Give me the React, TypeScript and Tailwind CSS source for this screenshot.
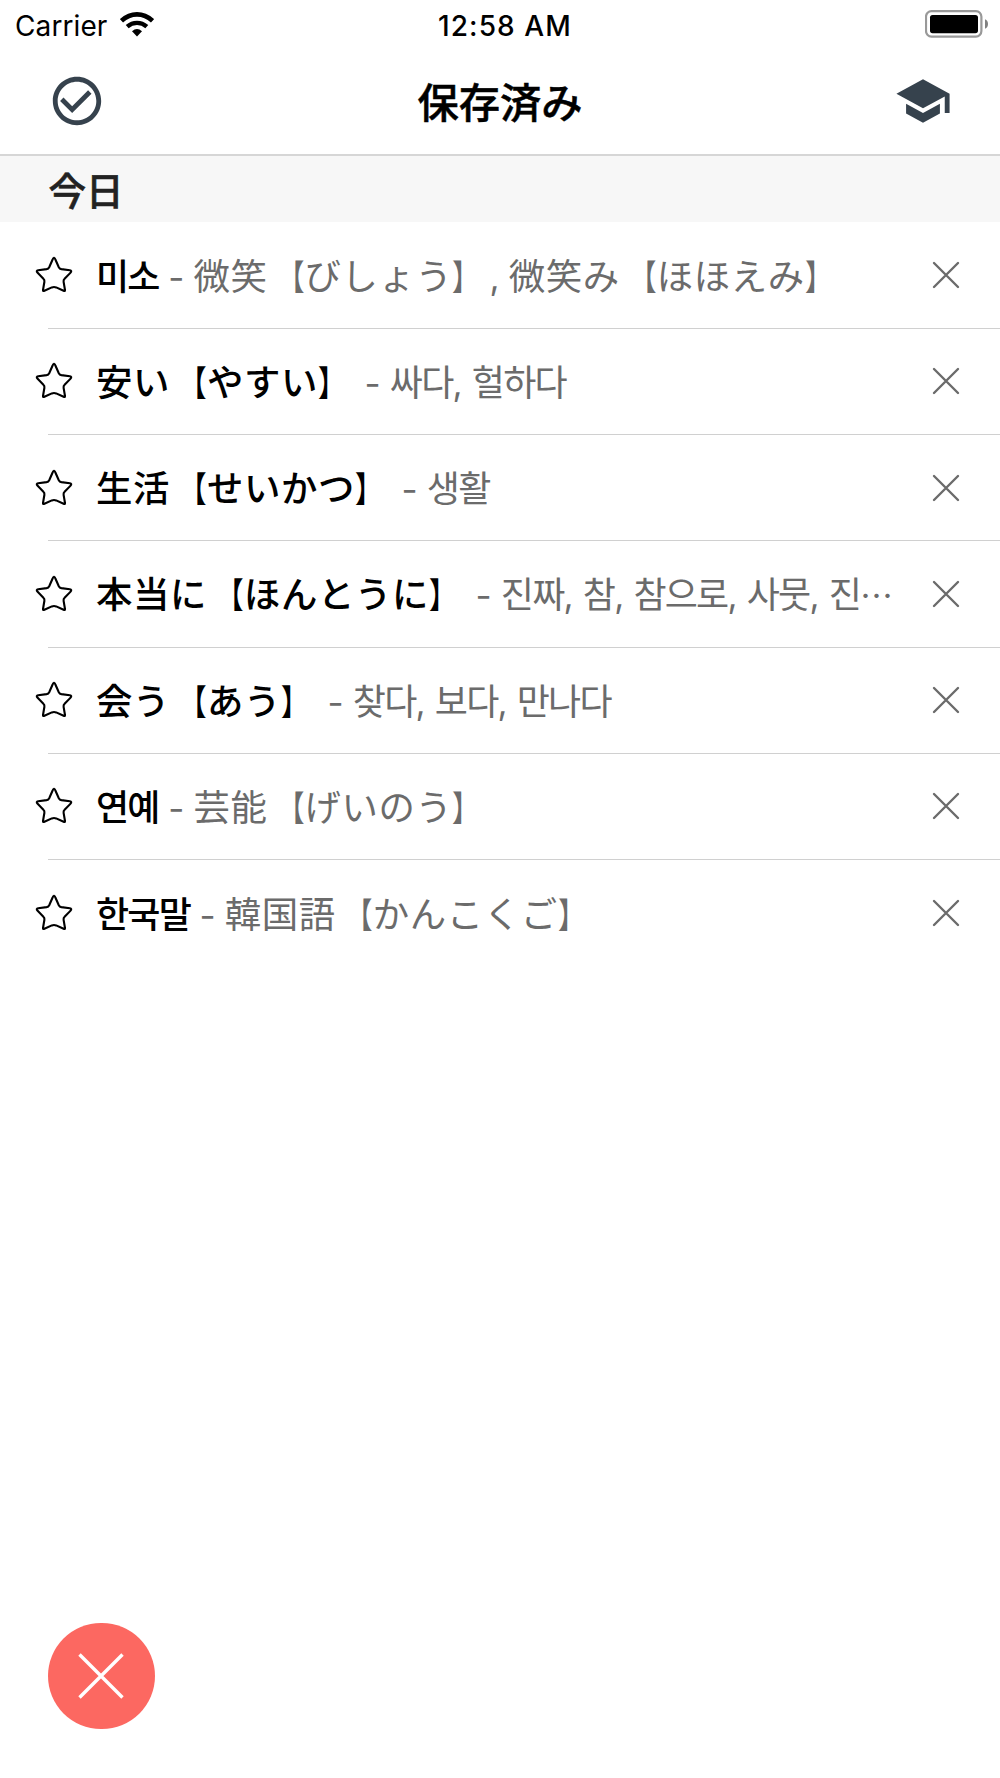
import React from 'react';
import { MdCheckCircleOutline, MdSchool } from 'react-icons/md';

interface SavedWord {
  term: string;
  meaning: string;
  truncated?: boolean;
}

const words: SavedWord[] = [
  { term: '미소', meaning: '微笑【びしょう】, 微笑み【ほほえみ】' },
  { term: '安い【やすい】', meaning: '싸다, 헐하다' },
  { term: '生活【せいかつ】', meaning: '생활' },
  { term: '本当に【ほんとうに】', meaning: '진짜, 참, 참으로, 사뭇, 진', truncated: true },
  { term: '会う【あう】', meaning: '찾다, 보다, 만나다' },
  { term: '연예', meaning: '芸能【げいのう】' },
  { term: '한국말', meaning: '韓国語【かんこくご】' },
];

// Splits mixed text so every script gets its own font and tracking
function MixedText({ text }: { text: string }) {
  const runs = text.match(/[\uac00-\ud7a3]+|[ ,-]+|[【】]|[^\uac00-\ud7a3 ,【】-]+/g) || [];

  return (
    <>
      {runs.map((run, index) => {
        if (/[\uac00-\ud7a3]/.test(run)) {
          return (
            <span key={index} lang="ko" className="font-['Noto_Sans_CJK_KR',sans-serif] text-[36px] tracking-[-1.8px]">
              {run}
            </span>
          );
        }
        if (/[ ,-]/.test(run)) {
          return (
            <span key={index} className="font-['Inter',sans-serif] text-[35px] tracking-[-0.3px]">
              {run}
            </span>
          );
        }
        if (run === '【') {
          return (
            <span key={index} className="inline-block w-[37px] origin-right scale-x-[0.78] text-right text-[35px]">
              {run}
            </span>
          );
        }
        if (run === '】') {
          return (
            <span key={index} className="inline-block w-[37px] origin-left scale-x-[0.78] text-left text-[35px]">
              {run}
            </span>
          );
        }
        return <span key={index}>{run}</span>;
      })}
    </>
  );
}

function StarIcon() {
  return (
    <svg className="h-[38px] w-[38px] shrink-0" viewBox="0 0 38 38" fill="none">
      <path
        d="M19 1.8Q20 2 20.6 4L23.8 11.2Q24.6 12.8 26.4 13.1L34.8 14.3Q37.2 14.9 35.6 16.6L29.6 22.8Q28.3 24 28.6 25.8L30 34Q30.2 35.6 28.6 34.8L21.2 31.4Q19 30.6 16.8 31.4L9.4 34.8Q7.8 35.6 8 34L9.4 25.8Q9.7 24 8.4 22.8L2.4 16.6Q.8 14.9 3.2 14.3L11.6 13.1Q13.4 12.8 14.2 11.2L17.4 4Q18 2 19 1.8Z"
        stroke="black"
        strokeWidth="2.1"
        strokeLinejoin="round"
      />
    </svg>
  );
}

function WifiIcon() {
  return (
    <svg className="h-[25px] w-[34px]" viewBox="0 0 34 25" fill="none">
      <path d="M1.5 8.8Q8.5 2.4 17 2.4T32.5 8.8" stroke="black" strokeWidth="4.6" />
      <path d="M7.2 14.6Q11.5 10.9 17 10.9T26.8 14.6" stroke="black" strokeWidth="4.4" />
      <path d="M12 19.3Q17 14.8 22 19.3L17 24.4Z" fill="black" />
    </svg>
  );
}

function BatteryIcon() {
  return (
    <svg className="h-[28px] w-[64px]" viewBox="0 0 64 28" fill="none">
      <rect x="1" y="1.2" width="55.4" height="25.4" rx="5.5" stroke="#999" strokeWidth="2.2" />
      <rect x="5" y="5" width="48" height="18.2" rx="2.6" fill="black" />
      <path d="M60 9.2Q63 10.5 63 14T60 18.8Z" fill="#808080" />
    </svg>
  );
}

function StatusBar() {
  return (
    <div className="grid h-[53px] grid-cols-3 items-center pr-[11px] pb-[2px] pl-[15px] font-['Inter',sans-serif] text-[28px]">
      <div className="flex items-center gap-[13px]">
        <span className="tracking-[0.1px]">Carrier</span>
        <div className="pb-[2px]">
          <WifiIcon />
        </div>
      </div>
      <span className="pl-[6px] text-center font-medium tracking-[1.1px] whitespace-nowrap">12:58 AM</span>
      <div className="flex justify-end pb-[3px]">
        <BatteryIcon />
      </div>
    </div>
  );
}

function WordRow({ word, last }: { word: SavedWord; last: boolean }) {
  return (
    <li className="flex h-[106.25px] flex-col">
      <div className="flex min-h-0 flex-1 items-center pr-[39.5px] pl-[35px]">
        <button aria-label="star">
          <StarIcon />
        </button>
        <p className="ml-[23px] flex-1 text-[36.4px] leading-[60px] tracking-[0.6px] whitespace-pre text-[#6b6b6b]">
          <span className="font-medium text-black">
            <MixedText text={word.term} />
          </span>
          <MixedText text={` - ${word.meaning}`} />
          {word.truncated && <span className="text-[33px]">…</span>}
        </p>
        <button aria-label="remove">
          <svg className="h-[30px] w-[30px]" viewBox="0 0 30 30">
            <path d="M3 3L27 27M27 3L3 27" stroke="#6b6b6b" strokeWidth="2.4" strokeLinecap="round" />
          </svg>
        </button>
      </div>
      {!last && <div className="ml-[48px] h-px bg-[#d0d0d0]" />}
    </li>
  );
}

export default function App() {
  return (
    <div className="relative h-[1778px] w-[1000px] overflow-hidden bg-white font-['Noto_Sans_CJK_JP',sans-serif] text-black" lang="ja">
      <StatusBar />

      <header className="grid h-[103px] grid-cols-3 items-center border-b-2 border-[#d6d6d6] pr-[48px] pb-[6px] pl-[48px] text-[#36424d]">
        <button className="justify-self-start">
          <MdCheckCircleOutline size={58} />
        </button>
        <h1 className="pb-[2px] text-center text-[41.3px] leading-[60px] font-medium text-black [-webkit-text-stroke:0.5px_black]">
          保存済み
        </h1>
        <button className="justify-self-end">
          <MdSchool size={58} />
        </button>
      </header>

      <section>
        <h2 className="flex h-[66px] items-center bg-[#f7f7f7] pt-[1px] pl-[48.5px] text-[37.6px] font-medium text-[#222] [-webkit-text-stroke:0.6px_#222]">
          今日
        </h2>
        <ul className="pt-[0.5px]">
          {words.map((word, index) => (
            <WordRow key={word.term} word={word} last={index === words.length - 1} />
          ))}
        </ul>
      </section>

      {/* Floating close button */}
      <button className="absolute bottom-[49px] left-[48px] flex h-[106.5px] w-[106.5px] items-center justify-center rounded-full bg-[#fc6861]">
        <svg className="h-[48px] w-[48px]" viewBox="0 0 48 48">
          <path d="M2.5 2.5L45.5 45.5M45.5 2.5L2.5 45.5" stroke="white" strokeWidth="3.4" />
        </svg>
      </button>
    </div>
  );
}
